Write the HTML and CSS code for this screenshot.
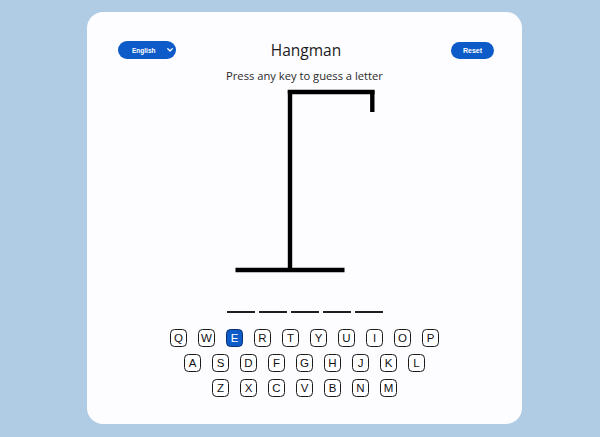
FILE: index.html
```html
<!DOCTYPE html>
<html lang="en">
<head>
<meta charset="utf-8">
<title>Hangman</title>
<link rel="stylesheet" href="styles.css">
</head>
<body>
<main class="card">
  <header class="top">
    <div class="lang">
      <span class="lang-label">English</span>
      <svg class="chev" width="6" height="4" viewBox="0 0 6 4"><path d="M0.8 0.8 L3 3 L5.2 0.8" fill="none" stroke="#fff" stroke-width="1.3" stroke-linecap="round" stroke-linejoin="round"/></svg>
    </div>
    <h1 class="title">Hangman</h1>
    <button class="reset">Reset</button>
  </header>
  <p class="hint">Press any key to guess a letter</p>
  <svg class="gallows" width="160" height="190" viewBox="0 0 160 190">
    <g stroke="#000" stroke-width="4.4" fill="none">
      <line x1="10.5" y1="184" x2="119.5" y2="184"/>
      <line x1="65" y1="184" x2="65" y2="4"/>
      <line x1="62.8" y1="6" x2="149.5" y2="6"/>
      <line x1="147.3" y1="4" x2="147.3" y2="26"/>
    </g>
  </svg>
  <div class="word">
    <span class="slot"></span><span class="slot"></span><span class="slot"></span><span class="slot"></span><span class="slot"></span>
  </div>
  <div class="keyboard">
    <div class="row">
      <span class="key">Q</span><span class="key">W</span><span class="key active">E</span><span class="key">R</span><span class="key">T</span><span class="key">Y</span><span class="key">U</span><span class="key">I</span><span class="key">O</span><span class="key">P</span>
    </div>
    <div class="row">
      <span class="key">A</span><span class="key">S</span><span class="key">D</span><span class="key">F</span><span class="key">G</span><span class="key">H</span><span class="key">J</span><span class="key">K</span><span class="key">L</span>
    </div>
    <div class="row">
      <span class="key">Z</span><span class="key">X</span><span class="key">C</span><span class="key">V</span><span class="key">B</span><span class="key">N</span><span class="key">M</span>
    </div>
  </div>
</main>
</body>
</html>
```
FILE: styles.css
```css
* { box-sizing: border-box; }
html, body { margin: 0; padding: 0; }
body {
  background: #b0cce4;
  font-family: "Open Sans", "Liberation Sans", sans-serif;
  height: 437px;
  overflow: hidden;
}
.card {
  width: 435px;
  height: 412px;
  margin: 12px 0 0 87px;
  background: #fdfcff;
  border-radius: 16px;
  padding: 28px 0 0 0;
}
.top {
  display: grid;
  grid-template-columns: 1fr auto 1fr;
  align-items: center;
  height: 20px;
  padding: 0 28px 0 31px;
}
.lang {
  justify-self: start;
  width: 58px;
  height: 18px;
  background: #0d5bc8;
  border-radius: 9px;
  display: flex;
  align-items: center;
  padding: 0 3px 0 14px;
  color: #fff;
  font-family: "Liberation Sans", Arial, sans-serif;
  font-size: 6.5px;
  font-weight: bold;
}
.lang-label { flex: 1; }
.chev { display: block; }
.title {
  margin: 0;
  font-size: 15.5px;
  font-weight: 400;
  color: #1c1c1c;
  line-height: 20px;
}
.reset {
  justify-self: end;
  width: 43px;
  height: 17px;
  border: 0;
  border-radius: 9px;
  background: #0d5bc8;
  color: #fff;
  font-family: "Liberation Sans", Arial, sans-serif;
  font-size: 7px;
  font-weight: bold;
  padding: 0;
}
.hint {
  margin: 8px 0 0 0;
  text-align: center;
  font-size: 11.2px;
  line-height: 16px;
  color: #2a2a2a;
}
.gallows {
  display: block;
  margin: 2px auto 0 auto;
}
.word {
  display: flex;
  justify-content: center;
  gap: 4px;
  margin-top: 17px;
}
.slot {
  width: 28px;
  height: 20px;
  border-bottom: 2px solid #1e1e1e;
}
.keyboard {
  display: flex;
  flex-direction: column;
  gap: 7px;
  margin-top: 16px;
}
.row {
  display: flex;
  justify-content: center;
  gap: 11px;
}
.key {
  width: 17px;
  height: 18px;
  border: 1.3px solid #1a1a1a;
  border-radius: 4.5px;
  display: flex;
  align-items: center;
  justify-content: center;
  font-family: "Liberation Sans", Arial, sans-serif;
  font-size: 11.5px;
  color: #111;
  background: #fff;
}
.key.active {
  background: #0d5bc8;
  color: #fff;
  border-color: #0a2f6e;
}
```
